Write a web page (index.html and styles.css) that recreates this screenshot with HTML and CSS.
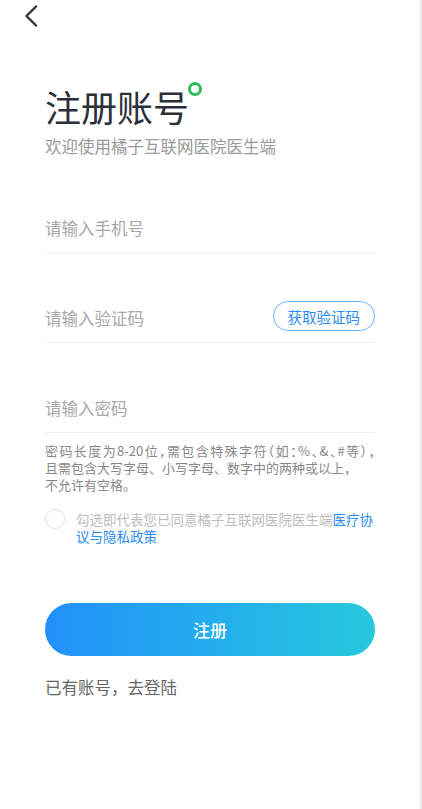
FILE: index.html
```html
<!DOCTYPE html>
<html lang="zh-CN">
  <head>
    <meta charset="UTF-8" />
    <meta name="viewport" content="width=device-width, initial-scale=1.0" />
    <title>注册账号</title>
    <link rel="stylesheet" href="styles.css">
  </head>
  <body>
    <div class="page">
      <div class="nav">
        <svg class="back" width="14" height="22" viewBox="0 0 14 22">
          <path d="M12 1.5 L2.5 11 L12 20.5" fill="none" stroke="#2f333a" stroke-width="2.4" stroke-linecap="round" stroke-linejoin="round" />
        </svg>
      </div>

      <div class="content">
        <div class="head">
          <h1 class="title">注册账号<span class="dot"></span></h1>
          <p class="subtitle">欢迎使用橘子互联网医院医生端</p>
        </div>

        <div class="field field-first">
          <span class="placeholder">请输入手机号</span>
        </div>
        <div class="field field-code">
          <span class="placeholder">请输入验证码</span>
          <button class="code-btn">获取验证码</button>
        </div>
        <div class="field">
          <span class="placeholder">请输入密码</span>
        </div>

        <p class="hint">
          <span class="hint-line hint-tight">密码长度为8-20位，需包含特殊字符（如：%、&amp;、#等），</span>
          <span class="hint-line">且需包含大写字母、小写字母、数字中的两种或以上，</span>
          <span class="hint-line">不允许有空格。</span>
        </p>

        <div class="agree">
          <span class="check"></span>
          <p class="agree-text">勾选即代表您已同意橘子互联网医院医生端<a href="#">医疗协议与隐私政策</a></p>
        </div>

        <button class="submit">注册</button>
        <a class="login" href="#">已有账号，去登陆</a>
      </div>
    </div>
  </body>
</html>
```

FILE: styles.css
```css
* {
  box-sizing: border-box;
}
body {
  margin: 0;
  background-color: #fff;
  font-family: "Noto Sans CJK SC", "Noto Sans", sans-serif;
}
.page {
  width: 422px;
  min-height: 809px;
  border-right: 2px solid #ebebeb;
}
.nav {
  height: 32px;
  padding: 5px 0 0 24px;
}
.back {
  display: block;
}
.content {
  padding: 0 45px 0 45px;
}
.head {
  margin-top: 50px;
}
.title {
  display: flex;
  align-items: flex-start;
  margin: 0;
  font-size: 36px;
  line-height: 48px;
  font-weight: 400;
  color: #2c3038;
}
.dot {
  width: 14px;
  height: 14px;
  margin: 0 0 0 -1px;
  border: 3px solid #2ebd5b;
  border-radius: 50%;
}
.subtitle {
  margin: 4px 0 0;
  font-size: 16.5px;
  line-height: 24px;
  color: #9a9a9a;
}
.field {
  display: flex;
  align-items: flex-end;
  justify-content: space-between;
  height: 90px;
  padding-bottom: 12px;
  border-bottom: 1px solid #eeeeee;
}
.field-first {
  height: 95px;
}
.field-code {
  align-items: center;
  padding: 48px 0 11px 0;
}
.placeholder {
  font-size: 16.5px;
  line-height: 24px;
  color: #a8a8a8;
}
.field-code .placeholder {
  margin-top: 4px;
}
.code-btn {
  height: 30px;
  padding: 0 14px;
  font-family: inherit;
  font-size: 14.5px;
  color: #2a8bf2;
  background-color: #fff;
  border: 1px solid #6cb2f8;
  border-radius: 15px;
  cursor: pointer;
}
.hint {
  margin: 9px 0 0;
  font-size: 13px;
  line-height: 17px;
  color: #888;
}
.hint-line {
  display: block;
  white-space: nowrap;
}
.hint-tight {
  font-feature-settings: "halt";
  text-align: justify;
  text-align-last: justify;
}
.agree {
  display: flex;
  align-items: flex-start;
  margin-top: 16px;
}
.check {
  flex: none;
  width: 20px;
  height: 20px;
  border: 1px solid #e0e0e0;
  border-radius: 50%;
}
.agree-text {
  margin: 2px 0 0 11px;
  font-size: 13.5px;
  line-height: 17px;
  color: #bdbdbd;
}
.agree-text a {
  color: #2a8bf2;
  text-decoration: none;
}
.submit {
  display: block;
  width: 100%;
  height: 53px;
  margin-top: 58px;
  font-family: inherit;
  font-size: 17px;
  font-weight: 500;
  color: #fff;
  background: linear-gradient(90deg, #2190fb 0%, #27c9dd 100%);
  border: none;
  border-radius: 27px;
  cursor: pointer;
}
.login {
  display: block;
  margin-top: 19px;
  font-size: 16.5px;
  line-height: 24px;
  color: #666;
  text-decoration: none;
}
```
